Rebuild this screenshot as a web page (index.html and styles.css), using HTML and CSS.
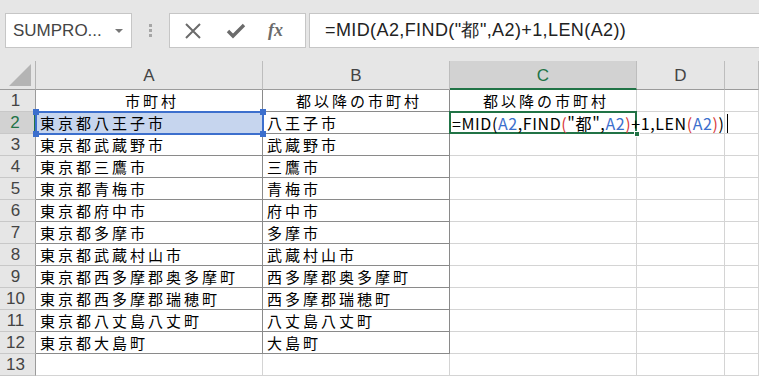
FILE: index.html
```html
<!DOCTYPE html>
<html lang="ja">
<head>
<meta charset="UTF-8">
<title>Book1 - Excel</title>
<link rel="stylesheet" href="styles.css">
</head>
<body>
<div class="formula-bar">
  <div class="name-box">
    <span class="name">SUMPRO...</span>
    <span class="drop"></span>
  </div>
  <div class="grip"><i></i><i></i><i></i></div>
  <div class="fx-buttons">
    <svg class="btn" width="18" height="18" viewBox="0 0 18 18"><path d="M2 2 L16 16 M16 2 L2 16" stroke="#6b6b6b" stroke-width="2" fill="none"/></svg>
    <svg class="btn" width="20" height="18" viewBox="0 0 20 18"><path d="M2 9 L7 14 L18 3" stroke="#6b6b6b" stroke-width="3.4" fill="none"/></svg>
    <span class="fx">fx</span>
  </div>
  <div class="formula-input">=MID(A2,FIND("都",A2)+1,LEN(A2))</div>
</div>

<div class="sheet">
  <!-- 列見出し -->
  <div class="corner"><span class="tri"></span></div>
  <div class="col-h">A</div>
  <div class="col-h">B</div>
  <div class="col-h sel">C</div>
  <div class="col-h">D</div>
  <div class="col-h"></div>

  <div class="row-h">1</div>
  <div class="cell b center">市町村</div>
  <div class="cell b center">都以降の市町村</div>
  <div class="cell center">都以降の市町村</div>
  <div class="cell"></div>
  <div class="cell"></div>

  <div class="row-h sel">2</div>
  <div class="cell b ref-cell">東京都八王子市<span class="hl"><i class="tl"></i><i class="tr"></i><i class="bl"></i><i class="br"></i></span></div>
  <div class="cell b">八王子市</div>
  <div class="cell active"><span class="edit">=MID(<span class="r">A2</span>,FIND<span class="p">(</span>"都",<span class="r">A2</span><span class="p">)</span>+1,LEN<span class="p">(</span><span class="r">A2</span><span class="p">)</span>)<span class="caret"></span></span><span class="handle"></span></div>
  <div class="cell"></div>
  <div class="cell"></div>

  <div class="row-h">3</div>
  <div class="cell b">東京都武蔵野市</div>
  <div class="cell b">武蔵野市</div>
  <div class="cell"></div><div class="cell"></div><div class="cell"></div>

  <div class="row-h">4</div>
  <div class="cell b">東京都三鷹市</div>
  <div class="cell b">三鷹市</div>
  <div class="cell"></div><div class="cell"></div><div class="cell"></div>

  <div class="row-h">5</div>
  <div class="cell b">東京都青梅市</div>
  <div class="cell b">青梅市</div>
  <div class="cell"></div><div class="cell"></div><div class="cell"></div>

  <div class="row-h">6</div>
  <div class="cell b">東京都府中市</div>
  <div class="cell b">府中市</div>
  <div class="cell"></div><div class="cell"></div><div class="cell"></div>

  <div class="row-h">7</div>
  <div class="cell b">東京都多摩市</div>
  <div class="cell b">多摩市</div>
  <div class="cell"></div><div class="cell"></div><div class="cell"></div>

  <div class="row-h">8</div>
  <div class="cell b">東京都武蔵村山市</div>
  <div class="cell b">武蔵村山市</div>
  <div class="cell"></div><div class="cell"></div><div class="cell"></div>

  <div class="row-h">9</div>
  <div class="cell b">東京都西多摩郡奥多摩町</div>
  <div class="cell b">西多摩郡奥多摩町</div>
  <div class="cell"></div><div class="cell"></div><div class="cell"></div>

  <div class="row-h">10</div>
  <div class="cell b">東京都西多摩郡瑞穂町</div>
  <div class="cell b">西多摩郡瑞穂町</div>
  <div class="cell"></div><div class="cell"></div><div class="cell"></div>

  <div class="row-h">11</div>
  <div class="cell b">東京都八丈島八丈町</div>
  <div class="cell b">八丈島八丈町</div>
  <div class="cell"></div><div class="cell"></div><div class="cell"></div>

  <div class="row-h">12</div>
  <div class="cell b">東京都大島町</div>
  <div class="cell b">大島町</div>
  <div class="cell"></div><div class="cell"></div><div class="cell"></div>

  <div class="row-h">13</div>
  <div class="cell"></div><div class="cell"></div><div class="cell"></div><div class="cell"></div><div class="cell"></div>
</div>
</body>
</html>
```

FILE: styles.css
```css
* {
  box-sizing: border-box;
}

body {
  margin: 0;
  width: 759px;
  height: 376px;
  overflow: hidden;
  background-color: #e6e6e6;
  font-family: 'Liberation Sans', Arial, sans-serif;
  color: #333;
}

/* 数式バー */
.formula-bar {
  height: 61px;
  display: flex;
  align-items: flex-start;
  padding-top: 13px;
  padding-left: 5px;
}

.name-box {
  width: 127px;
  height: 35px;
  background-color: #fff;
  border: 1px solid #c6c6c6;
  display: flex;
  align-items: center;
  padding-left: 7px;
  font-size: 17px;
  color: #444;
}

.name-box .name {
  flex: 1;
}

.name-box .drop {
  width: 0;
  height: 0;
  border-left: 4px solid transparent;
  border-right: 4px solid transparent;
  border-top: 4px solid #777;
  margin-right: 8px;
}

.grip {
  width: 37px;
  height: 35px;
  display: flex;
  flex-direction: column;
  align-items: center;
  justify-content: center;
  gap: 2px;
}

.grip i {
  width: 3px;
  height: 3px;
  background-color: #a6a6a6;
}

.fx-buttons {
  width: 137px;
  height: 35px;
  background-color: #fff;
  border: 1px solid #c6c6c6;
  display: flex;
  align-items: center;
  padding-left: 14px;
  gap: 24px;
}

.fx {
  font-family: 'Liberation Serif', 'Times New Roman', serif;
  font-style: italic;
  font-weight: bold;
  font-size: 18px;
  color: #6b6b6b;
  margin-left: -2px;
}

.formula-input {
  flex: 1;
  height: 35px;
  margin-left: 3px;
  background-color: #fff;
  border: 1px solid #c6c6c6;
  border-right: none;
  padding-left: 15px;
  font-size: 18px;
  letter-spacing: 0.4px;
  line-height: 33px;
  color: #222;
  white-space: nowrap;
}

/* シート */
.sheet {
  display: grid;
  grid-template-columns: 36px 227px 187px 187px 88px 1fr;
  grid-template-rows: 29px repeat(13, 22px);
  background-color: #fff;
}

.corner,
.col-h,
.row-h {
  background-color: #e6e6e6;
  color: #444;
  font-size: 17px;
}

.corner {
  border-right: 1px solid #b4b4b4;
  border-bottom: 1px solid #9b9b9b;
  position: relative;
}

.corner .tri {
  position: absolute;
  right: 4px;
  bottom: 3px;
  width: 0;
  height: 0;
  border-left: 22px solid transparent;
  border-bottom: 22px solid #b4b4b4;
}

.col-h {
  border-right: 1px solid #bdbdbd;
  border-bottom: 1px solid #9b9b9b;
  display: flex;
  align-items: center;
  justify-content: center;
  padding-top: 2px;
}

.col-h.sel {
  background-color: #d2d2d2;
  color: #217346;
  border-bottom: 2px solid #217346;
}

.row-h {
  border-right: 1px solid #9b9b9b;
  border-bottom: 1px solid #c8c8c8;
  display: flex;
  align-items: center;
  justify-content: center;
  padding-right: 4px;
  line-height: 1;
}

.row-h.sel {
  background-color: #d2d2d2;
  color: #217346;
  border-right: 2px solid #217346;
}

.cell {
  position: relative;
  border-right: 1px solid #d4d4d4;
  border-bottom: 1px solid #d4d4d4;
  font-family: 'Noto Sans CJK JP', 'Liberation Sans', sans-serif;
  font-size: 15px;
  letter-spacing: 3px;
  line-height: 20px;
  color: #000;
  padding-left: 4px;
  white-space: nowrap;
  display: flex;
  align-items: flex-end;
}

.cell.b {
  border-right-color: #8a8a8a;
  border-bottom-color: #8a8a8a;
}

.cell.center {
  justify-content: center;
  padding-left: 6px;
}

/* A2 参照の強調表示 */
.ref-cell {
  background-color: #c6d5ee;
  z-index: 1;
}

.hl {
  position: absolute;
  top: -1px;
  left: -1px;
  right: -2px;
  bottom: -2px;
  border: 2px solid #3c6fcd;
}

.hl i {
  position: absolute;
  width: 6px;
  height: 6px;
  background-color: #3c6fcd;
}

.hl .tl { top: -4px; left: -4px; }
.hl .tr { top: -4px; right: -4px; }
.hl .bl { bottom: -4px; left: -4px; }
.hl .br { bottom: -4px; right: -4px; }

/* アクティブセル */
.active {
  z-index: 2;
}

.active::before {
  content: '';
  position: absolute;
  top: -1px;
  left: -1px;
  right: -1px;
  bottom: -1px;
  border: 2px solid #217346;
}

.edit {
  font-size: 16px;
  letter-spacing: 0.6px;
  position: relative;
  z-index: 3;
  margin-left: -2px;
}

.edit .r {
  color: #3c6fcd;
}

.edit .p {
  color: #d9393a;
}

.caret {
  display: inline-block;
  width: 1px;
  height: 19px;
  background-color: #000;
  vertical-align: -3px;
  margin-left: 2px;
}

.handle {
  position: absolute;
  right: -4px;
  bottom: -4px;
  width: 6px;
  height: 6px;
  background-color: #217346;
  border: 1px solid #fff;
  z-index: 4;
}
```
